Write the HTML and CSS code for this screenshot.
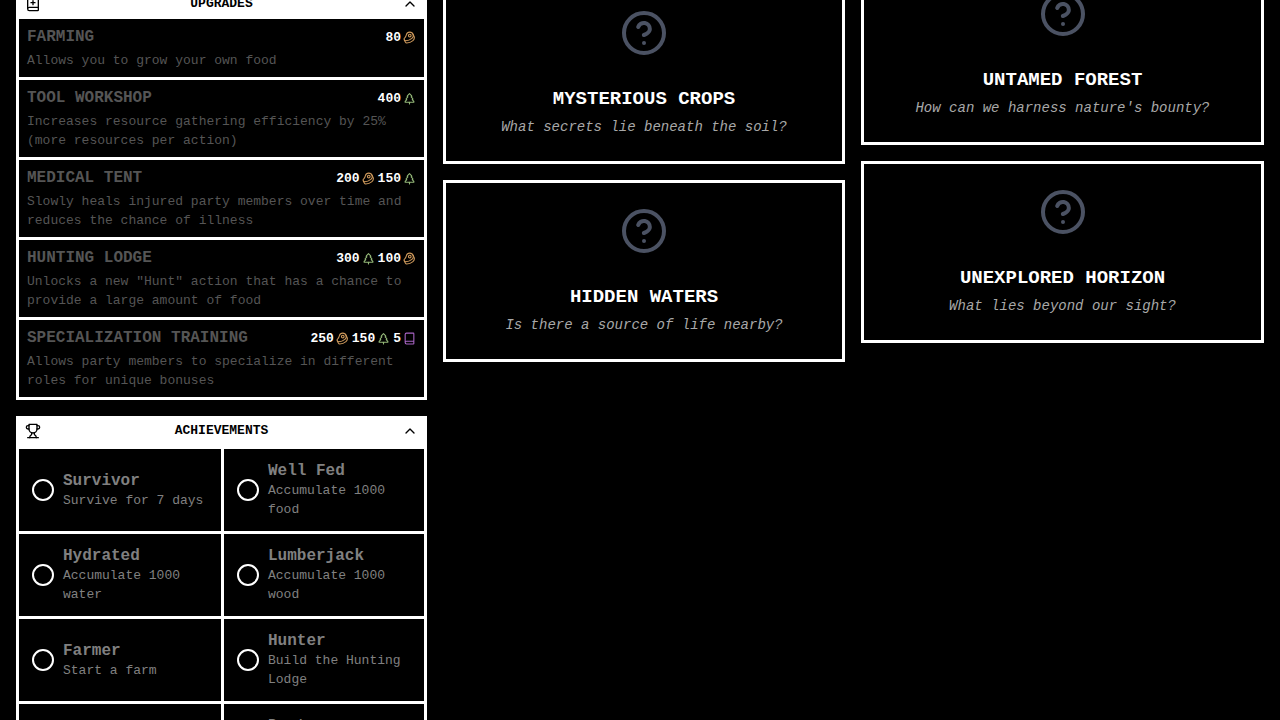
FILE: index.html
```html
<!DOCTYPE html>
<html lang="en">
<head>
<meta charset="utf-8">
<meta name="viewport" content="width=device-width, initial-scale=1">
<title>Upgrades and Achievements</title>
<link rel="stylesheet" href="styles.css">
</head>
<body>
<svg class="sprite" aria-hidden="true">
  <symbol id="beef" viewBox="0 0 24 24"><circle cx="12.5" cy="8.5" r="2.5"/><path d="M12.5 2a6.5 6.5 0 0 0-6.22 4.6c-1.1 3.13-.78 3.9-3.18 6.08A3 3 0 0 0 5 18c4 0 8.4-1.8 11.4-4.3A6.5 6.5 0 0 0 12.5 2Z"/><path d="m18.5 6 2.19 4.5a6.48 6.48 0 0 1 .31 2 6.49 6.49 0 0 1-2.6 5.2C15.4 20.2 11 22 7 22a3 3 0 0 1-2.68-1.66L2.4 16.5"/></symbol>
  <symbol id="tree" viewBox="0 0 24 24"><path d="m17 14 3 3.3a1 1 0 0 1-.7 1.7H4.7a1 1 0 0 1-.7-1.7L7 14h-.3a1 1 0 0 1-.7-1.7L9 9h-.2A1 1 0 0 1 8 7.3L12 3l4 4.3a1 1 0 0 1-.8 1.7H15l3 3.3a1 1 0 0 1-.7 1.7H17Z"/><path d="M12 22v-3"/></symbol>
  <symbol id="book" viewBox="0 0 24 24"><path d="M4 19.5v-15A2.5 2.5 0 0 1 6.5 2H19a1 1 0 0 1 1 1v18a1 1 0 0 1-1 1H6.5a1 1 0 0 1 0-5H20"/></symbol>
  <symbol id="book-plus" viewBox="0 0 24 24"><path d="M4 19.5v-15A2.5 2.5 0 0 1 6.5 2H19a1 1 0 0 1 1 1v18a1 1 0 0 1-1 1H6.5a1 1 0 0 1 0-5H20"/><path d="M9 10h6"/><path d="M12 7v6"/></symbol>
  <symbol id="trophy" viewBox="0 0 24 24"><path d="M6 9H4.5a2.5 2.5 0 0 1 0-5H6"/><path d="M18 9h1.5a2.5 2.5 0 0 0 0-5H18"/><path d="M4 22h16"/><path d="M10 14.66V17c0 .55-.47.98-.97 1.21C7.85 18.75 7 20.24 7 22"/><path d="M14 14.66V17c0 .55.47.98.97 1.21C16.15 18.75 17 20.24 17 22"/><path d="M18 2H6v7a6 6 0 0 0 12 0V2Z"/></symbol>
  <symbol id="chevron" viewBox="0 0 24 24"><path d="m18 15-6-6-6 6"/></symbol>
  <symbol id="circle" viewBox="0 0 24 24"><circle cx="12" cy="12" r="10"/></symbol>
  <symbol id="help" viewBox="0 0 24 24"><circle cx="12" cy="12" r="10"/><path d="M9.09 9a3 3 0 0 1 5.83 1c0 2-3 3-3 3"/><path d="M12 17h.01"/></symbol>
</svg>
<main class="board">
  <div class="column column-panels">
    <section class="panel">
      <button class="panel-header" type="button" aria-expanded="true">
        <svg class="icon"><use href="#book-plus"/></svg><span>UPGRADES</span><svg class="icon"><use href="#chevron"/></svg>
      </button>
      <div class="upgrades">
        <button class="upgrade" type="button" disabled>
          <span class="upgrade-top"><span class="upgrade-name">FARMING</span><span class="costs"><span class="cost">80<svg class="food"><use href="#beef"/></svg></span></span></span>
          <span class="upgrade-text">Allows you to grow your own food</span>
        </button>
        <button class="upgrade" type="button" disabled>
          <span class="upgrade-top"><span class="upgrade-name">TOOL WORKSHOP</span><span class="costs"><span class="cost">400<svg class="wood"><use href="#tree"/></svg></span></span></span>
          <span class="upgrade-text">Increases resource gathering efficiency by 25% (more resources per action)</span>
        </button>
        <button class="upgrade" type="button" disabled>
          <span class="upgrade-top"><span class="upgrade-name">MEDICAL TENT</span><span class="costs"><span class="cost">200<svg class="food"><use href="#beef"/></svg></span><span class="cost">150<svg class="wood"><use href="#tree"/></svg></span></span></span>
          <span class="upgrade-text">Slowly heals injured party members over time and reduces the chance of illness</span>
        </button>
        <button class="upgrade" type="button" disabled>
          <span class="upgrade-top"><span class="upgrade-name">HUNTING LODGE</span><span class="costs"><span class="cost">300<svg class="wood"><use href="#tree"/></svg></span><span class="cost">100<svg class="food"><use href="#beef"/></svg></span></span></span>
          <span class="upgrade-text">Unlocks a new "Hunt" action that has a chance to provide a large amount of food</span>
        </button>
        <button class="upgrade" type="button" disabled>
          <span class="upgrade-top"><span class="upgrade-name">SPECIALIZATION TRAINING</span><span class="costs"><span class="cost">250<svg class="food"><use href="#beef"/></svg></span><span class="cost">150<svg class="wood"><use href="#tree"/></svg></span><span class="cost">5<svg class="knowledge"><use href="#book"/></svg></span></span></span>
          <span class="upgrade-text">Allows party members to specialize in different roles for unique bonuses</span>
        </button>
      </div>
    </section>
    <section class="panel">
      <button class="panel-header" type="button" aria-expanded="true">
        <svg class="icon"><use href="#trophy"/></svg><span>ACHIEVEMENTS</span><svg class="icon"><use href="#chevron"/></svg>
      </button>
      <ul class="achievements">
        <li class="achievement"><svg class="mark"><use href="#circle"/></svg><div><h3>Survivor</h3><p>Survive for 7 days</p></div></li>
        <li class="achievement"><svg class="mark"><use href="#circle"/></svg><div><h3>Well Fed</h3><p>Accumulate 1000 food</p></div></li>
        <li class="achievement"><svg class="mark"><use href="#circle"/></svg><div><h3>Hydrated</h3><p>Accumulate 1000 water</p></div></li>
        <li class="achievement"><svg class="mark"><use href="#circle"/></svg><div><h3>Lumberjack</h3><p>Accumulate 1000 wood</p></div></li>
        <li class="achievement"><svg class="mark"><use href="#circle"/></svg><div><h3>Farmer</h3><p>Start a farm</p></div></li>
        <li class="achievement"><svg class="mark"><use href="#circle"/></svg><div><h3>Hunter</h3><p>Build the Hunting Lodge</p></div></li>
        <li class="achievement"><svg class="mark"><use href="#circle"/></svg></li>
        <li class="achievement"><svg class="mark"><use href="#circle"/></svg><div><h3>Doctor</h3><p>Build the Medical Tent</p></div></li>
      </ul>
    </section>
  </div>
  <div class="column column-middle">
    <article class="card"><svg><use href="#help"/></svg><h2>MYSTERIOUS CROPS</h2><p>What secrets lie beneath the soil?</p></article>
    <article class="card"><svg><use href="#help"/></svg><h2>HIDDEN WATERS</h2><p>Is there a source of life nearby?</p></article>
  </div>
  <div class="column column-last">
    <article class="card"><svg><use href="#help"/></svg><h2>UNTAMED FOREST</h2><p>How can we harness nature's bounty?</p></article>
    <article class="card"><svg><use href="#help"/></svg><h2>UNEXPLORED HORIZON</h2><p>What lies beyond our sight?</p></article>
  </div>
</main>
</body>
</html>
```
FILE: styles.css
```css
* {
  box-sizing: border-box;
}

body {
  margin: 0;
  background: #000;
  color: #fff;
  font-family: "Liberation Mono", monospace;
  font-size: 13px;
  line-height: 19px;
}

button {
  font: inherit;
  border: 0;
}

h2, h3, p, ul {
  margin: 0;
  padding: 0;
}

svg {
  flex: none;
  fill: none;
  stroke: currentColor;
  stroke-width: 2;
  stroke-linecap: round;
  stroke-linejoin: round;
}

.sprite {
  display: none;
}

.board {
  display: grid;
  grid-template-columns: 411fr 402fr 403fr;
  align-items: start;
  gap: 16px;
  height: 100vh;
  padding: 0 16px;
  overflow: hidden;
}

.column {
  display: flex;
  flex-direction: column;
  gap: 16px;
  min-width: 0;
}

.column-panels {
  margin-top: -11px;
}

.column-middle {
  margin-top: -18px;
}

.column-last {
  margin-top: -37px;
}

.panel {
  border: 3px solid #fff;
}

.panel-header {
  display: flex;
  align-items: center;
  justify-content: space-between;
  width: 100%;
  padding: 3px 6px;
  border-bottom: 3px solid #fff;
  background: #fff;
  color: #000;
  font-weight: bold;
  line-height: 18px;
}

.icon {
  width: 16px;
  height: 16px;
}

.upgrades {
  display: grid;
  gap: 3px;
  background: #fff;
}

.upgrade {
  display: block;
  width: 100%;
  padding: 9px 8px 7px;
  background: #000;
  color: #555;
  text-align: left;
}

.upgrade-top {
  display: flex;
  align-items: center;
  justify-content: space-between;
  margin-bottom: 4px;
}

.upgrade-name {
  font-size: 16px;
  font-weight: bold;
}

.upgrade-text {
  display: block;
}

.costs {
  display: flex;
  align-items: center;
  gap: 3px;
}

.cost {
  display: flex;
  align-items: center;
  gap: 2px;
  color: #fff;
  font-weight: bold;
}

.cost svg {
  width: 13px;
  height: 13px;
}

.food {
  color: #cf9a5c;
}

.wood {
  color: #94b878;
}

.knowledge {
  color: #a864c4;
}

.achievements {
  display: grid;
  grid-template-columns: 202fr 200fr;
  gap: 3px;
  border-top: 3px solid #fff;
  background: #fff;
  list-style: none;
}

.achievement {
  display: flex;
  align-items: center;
  gap: 8px;
  padding: 12px;
  background: #000;
  color: #808080;
}

.achievement h3 {
  font-size: 16px;
  line-height: 20px;
}

.mark {
  width: 24px;
  height: 24px;
  color: #fff;
}

.card {
  display: flex;
  flex-direction: column;
  align-items: center;
  padding: 24px;
  border: 3px solid #fff;
  text-align: center;
}

.card svg {
  width: 48px;
  height: 48px;
  margin-bottom: 30px;
  color: #4b5263;
}

.card h2 {
  margin-bottom: 6px;
  font-size: 19px;
  line-height: 24px;
}

.card p {
  color: #a8a8a8;
  font-size: 14px;
  font-style: italic;
  line-height: 20px;
}
```
